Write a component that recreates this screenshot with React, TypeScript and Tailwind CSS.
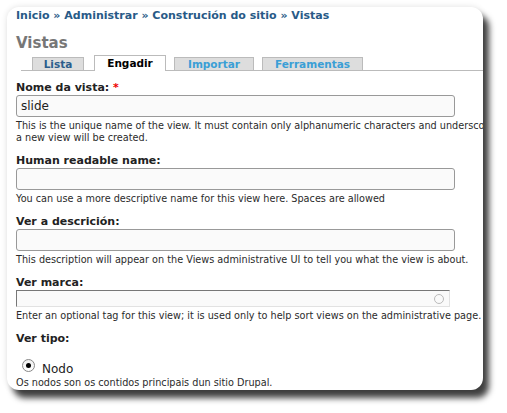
const font = { fontFamily: '"DejaVu Sans", Verdana, sans-serif' };

const Label = ({ children }: { children: React.ReactNode }) => (
  <div className="h-[14px] leading-[14px] text-[11px] font-bold text-[#222]">{children}</div>
);

const Help = ({ children }: { children: React.ReactNode }) => (
  <div className="mt-[3px] text-[9.7px] leading-[12px] text-[#2b2b2b] whitespace-nowrap">{children}</div>
);

const Field = ({
  label,
  required,
  value,
  help,
}: {
  label: string;
  required?: boolean;
  value?: string;
  help: React.ReactNode;
}) => (
  <div className="mt-[10px]">
    <Label>
      {label} {required && <span className="text-[#e00]">*</span>}
    </Label>
    <div className="w-[439px] h-[22px] rounded-[3px] border border-[#999] bg-[#fafafa] px-[4px] text-[12px] leading-[20px] text-[#222]">
      {value}
    </div>
    <Help>{help}</Help>
  </div>
);

const Tab = ({
  label,
  active,
  color,
  width,
  ml,
}: {
  label: string;
  active?: boolean;
  color: string;
  width: string;
  ml: string;
}) =>
  active ? (
    <div
      className={`${width} ${ml} h-[16px] -mb-px border border-b-0 border-[#bbb] bg-white text-center text-[10.5px] leading-[14px] font-bold text-black`}
    >
      {label}
    </div>
  ) : (
    <div
      className={`${width} ${ml} h-[13px] border border-b-0 border-[#bbb] bg-[#ddd] text-center text-[10.5px] leading-[12px] font-bold ${color}`}
    >
      {label}
    </div>
  );

export default function App() {
  return (
    <div className="w-[507px] h-[413px] bg-white pl-[7px] pt-[7px]" style={font}>
      <div className="w-[476px] h-[383px] rounded-[12px] overflow-hidden bg-white shadow-[6px_8px_6px_rgba(0,0,0,0.75),0_0_6px_rgba(0,0,0,0.12)] pl-[9px]">
        <div className="mt-[2px] h-[14px] leading-[14px] text-[11px] font-bold text-[#285a87] whitespace-nowrap">
          Inicio » Administrar » Construción do sitio » Vistas
        </div>
        <div className="mt-[11px] h-[18px] leading-[18px] text-[15px] font-bold text-[#777]">
          Vistas
        </div>
        <div className="mt-[3px] ml-[5px] flex items-end h-[16px] border-b border-[#bbb]">
          <Tab label="Lista" color="text-[#2b5d8c]" width="w-[52px]" ml="ml-[11px]" />
          <Tab label="Engadir" active color="" width="w-[72px]" ml="ml-[10px]" />
          <Tab label="Importar" color="text-[#3a9fd6]" width="w-[80px]" ml="ml-[8px]" />
          <Tab label="Ferramentas" color="text-[#3a9fd6]" width="w-[101px]" ml="ml-[8px]" />
        </div>

        <div className="mt-[9px]">
          <Field
            label="Nome da vista:"
            required
            value="slide"
            help={
              <>
                This is the unique name of the view. It must contain only alphanumeric characters and underscores; it is used to identify the view internally.
                <br />
                a new view will be created.
              </>
            }
          />
          <Field
            label="Human readable name:"
            help="You can use a more descriptive name for this view here. Spaces are allowed"
          />
          <Field
            label="Ver a descrición:"
            help="This description will appear on the Views administrative UI to tell you what the view is about."
          />

          <div className="mt-[10px]">
            <Label>Ver marca:</Label>
            <div className="relative w-[434px] h-[17px] border-t border-l border-t-[#777] border-l-[#777] border-b border-r border-b-[#e2e2e2] border-r-[#e2e2e2] bg-[#fafafa]">
              <span className="absolute right-[5px] top-[3px] w-[10px] h-[10px] rounded-full border border-[#bbb]" />
            </div>
            <Help>Enter an optional tag for this view; it is used only to help sort views on the administrative page.</Help>
          </div>

          <div className="mt-[10px]">
            <Label>Ver tipo:</Label>
            <div className="mt-[13px] flex items-start h-[18px] pl-[6px]">
              <span className="w-[13px] h-[13px] rounded-full border border-[#888] bg-gradient-to-b from-[#eee] to-white flex items-center justify-center">
                <span className="w-[5px] h-[5px] rounded-full bg-black" />
              </span>
              <span className="ml-[7px] mt-[2px] text-[12px] leading-[16px] text-[#222]">Nodo</span>
            </div>
            <div className="text-[9.7px] leading-[12px] text-[#2b2b2b]">
              Os nodos son os contidos principais dun sitio Drupal.
            </div>
          </div>
        </div>
      </div>
    </div>
  );
}
